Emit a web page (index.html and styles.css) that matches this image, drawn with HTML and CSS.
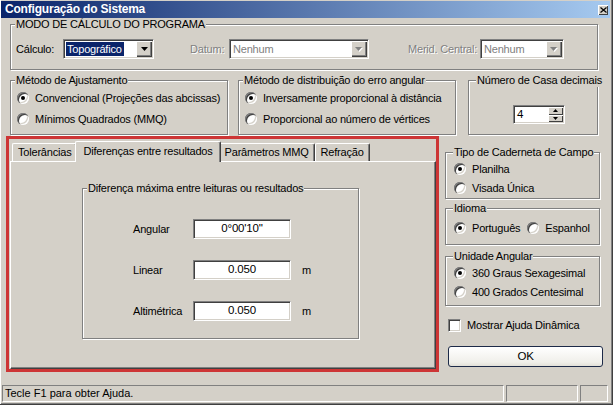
FILE: index.html
```html
<!DOCTYPE html>
<html lang="pt">
<head>
<meta charset="utf-8">
<title>Configuração do Sistema</title>
<link rel="stylesheet" href="styles.css">
</head>
<body>
<div class="window">
  <div class="titlebar">
    <span class="title">Configuração do Sistema</span>
    <span class="close"><svg width="7" height="6" viewBox="0 0 7 6"><path d="M0.5 0.5L6.5 5.5M6.5 0.5L0.5 5.5" stroke="#000" stroke-width="1.2" fill="none"/></svg></span>
  </div>
  <div class="content">
    <fieldset class="group g-modo">
      <legend>MODO DE CÁLCULO DO PROGRAMA</legend>
      <div class="gbody modo-row">
        <span class="lbl lbl-calc">Cálculo:</span>
        <div class="combo w-calc">
          <span class="combo-text"><span class="sel">Topográfico</span></span>
          <span class="dd"><svg width="7" height="4" viewBox="0 0 7 4"><path d="M0 0H7L3.5 4Z" fill="#000"/></svg></span>
        </div>
        <span class="lbl lbl-datum disabled">Datum:</span>
        <div class="combo w-datum">
          <span class="combo-text dis-text">Nenhum</span>
          <span class="dd"><svg width="8" height="5" viewBox="0 0 8 5"><path d="M1 1H8L4.5 5Z" fill="#fff"/><path d="M0 0H7L3.5 4Z" fill="#808080"/></svg></span>
        </div>
        <span class="lbl lbl-merid disabled">Merid. Central:</span>
        <div class="combo w-merid">
          <span class="combo-text dis-text">Nenhum</span>
          <span class="dd"><svg width="8" height="5" viewBox="0 0 8 5"><path d="M1 1H8L4.5 5Z" fill="#fff"/><path d="M0 0H7L3.5 4Z" fill="#808080"/></svg></span>
        </div>
      </div>
    </fieldset>

    <div class="row2">
      <fieldset class="group g-ajuste">
        <legend>Método de Ajustamento</legend>
        <div class="gbody radios2">
          <div class="ropt"><span class="radio on"></span><span>Convencional (Projeções das abcissas)</span></div>
          <div class="ropt"><span class="radio"></span><span>Mínimos Quadrados (MMQ)</span></div>
        </div>
      </fieldset>
      <fieldset class="group g-distr">
        <legend>Método de distribuição do erro angular</legend>
        <div class="gbody radios2">
          <div class="ropt"><span class="radio on"></span><span>Inversamente proporcional à distância</span></div>
          <div class="ropt"><span class="radio"></span><span>Proporcional ao número de vértices</span></div>
        </div>
      </fieldset>
      <fieldset class="group g-casas">
        <legend class="leg-r">Número de Casa decimais</legend>
        <div class="gbody casas-body">
          <div class="spin">
            <span class="spin-text">4</span>
            <span class="spin-btns">
              <span class="sb"><svg width="5" height="3" viewBox="0 0 5 3"><path d="M2.5 0L5 3H0Z" fill="#000"/></svg></span>
              <span class="sb"><svg width="5" height="3" viewBox="0 0 5 3"><path d="M0 0H5L2.5 3Z" fill="#000"/></svg></span>
            </span>
          </div>
        </div>
      </fieldset>
    </div>

    <div class="lower">
      <div class="redbox">
        <div class="tabs">
          <div class="tabstrip">
            <span class="tab">Tolerâncias</span>
            <span class="tab active">Diferenças entre resultados</span>
            <span class="tab">Parâmetros MMQ</span>
            <span class="tab">Refração</span>
          </div>
          <div class="tabpanel">
            <fieldset class="group g-diff">
              <legend>Diferença máxima entre leituras ou resultados</legend>
              <div class="gbody diff-body">
                <div class="frow"><span class="flbl">Angular</span><span class="field">0°00'10''</span></div>
                <div class="frow"><span class="flbl">Linear</span><span class="field">0.050</span><span class="unit">m</span></div>
                <div class="frow"><span class="flbl">Altimétrica</span><span class="field">0.050</span><span class="unit">m</span></div>
              </div>
            </fieldset>
          </div>
        </div>
      </div>

      <div class="rightcol">
        <fieldset class="group g-tipo">
          <legend class="leg-r">Tipo de Caderneta de Campo</legend>
          <div class="gbody tipo-body">
            <div class="ropt r17"><span class="radio on"></span><span>Planilha</span></div>
            <div class="ropt r17"><span class="radio"></span><span>Visada Única</span></div>
          </div>
        </fieldset>
        <fieldset class="group g-idioma">
          <legend class="leg-r">Idioma</legend>
          <div class="gbody idioma-body">
            <div class="ropt"><span class="radio on"></span><span>Português</span></div>
            <div class="ropt esp"><span class="radio"></span><span>Espanhol</span></div>
          </div>
        </fieldset>
        <fieldset class="group g-unid">
          <legend class="leg-r">Unidade Angular</legend>
          <div class="gbody unid-body">
            <div class="ropt"><span class="radio on"></span><span>360 Graus Sexagesimal</span></div>
            <div class="ropt"><span class="radio"></span><span>400 Grados Centesimal</span></div>
          </div>
        </fieldset>
        <div class="checkrow"><span class="check"></span><span>Mostrar Ajuda Dinâmica</span></div>
        <div class="okbtn">OK</div>
      </div>
    </div>

    <div class="statusbar">
      <span class="panel p-main">Tecle F1 para obter Ajuda.</span>
      <span class="panel p-2"></span>
      <span class="panel p-3"></span>
    </div>
  </div>
</div>
</body>
</html>
```

FILE: styles.css
```css
* { box-sizing: border-box; }
html, body { margin: 0; padding: 0; background: #d4d0c8; }
body {
  font-family: "Liberation Sans", Arial, sans-serif;
  font-size: 11px;
  letter-spacing: -0.2px;
  color: #000;
}

.window {
  width: 613px;
  height: 405px;
  display: flex;
  flex-direction: column;
  background: #d4d0c8;
  padding: 1px 2px 1px 1px;
  border-right: 1px solid #404040;
  border-bottom: 1px solid #404040;
  box-shadow: inset 1px 0 0 #fff, inset -1px -1px 0 #808080;
}

.titlebar {
  height: 17px;
  flex: none;
  display: flex;
  align-items: center;
  background: linear-gradient(to right, #0a246a, #a6caf0);
  padding: 0 2px 0 4px;
}
.title {
  color: #fff;
  font-weight: bold;
  font-size: 12px;
  letter-spacing: -0.2px;
  line-height: 17px;
}
.close {
  margin-left: auto;
  width: 10px;
  height: 10px;
  background: #d4d0c8;
  box-shadow: inset 1px 1px 0 #fff, inset -1px -1px 0 #404040;
  display: flex;
  align-items: center;
  justify-content: center;
}
.close svg { display: block; }

.content {
  flex: 1;
  display: flex;
  flex-direction: column;
  padding-left: 5px;
}

/* group boxes */
fieldset.group {
  margin: 0;
  padding: 0;
  min-width: 0;
  border: 1px solid #808080;
  box-shadow: 1px 1px 0 #fff, inset 1px 1px 0 #fff;
}
fieldset.group legend {
  padding: 0 1px;
  margin-left: 4px;
  height: 13px;
  line-height: 13px;
  white-space: nowrap;
  background: #d4d0c8;
}
fieldset.group legend.leg-r { margin-left: 7px; }

.g-modo { margin-left: 4px !important; width: 588px; }
.modo-row {
  display: flex;
  align-items: center;
  padding: 8px 0 10px 5px;
}
.lbl { line-height: 13px; }
.lbl-calc { width: 47px; }
.lbl-datum { margin-left: 36px; width: 39px; }
.lbl-merid { margin-left: 39px; width: 72px; }
.disabled { color: #808080; text-shadow: 1px 1px 0 #fff; }

.combo {
  display: flex;
  height: 20px;
  background: #fff;
  border: 1px solid;
  border-color: #808080 #fff #fff #808080;
  box-shadow: inset 1px 1px 0 #404040, inset -1px -1px 0 #d4d0c8;
  padding: 1px;
}
.w-calc { width: 91px; }
.w-datum { width: 140px; }
.w-merid { width: 84px; }
.combo-text {
  flex: 1;
  display: flex;
  align-items: center;
  padding-left: 1px;
  line-height: 13px;
}
.sel { background: #0a246a; color: #fff; padding: 1px 2px 0 1px; }
.dis-text { color: #808080; padding-left: 2px; }
.dd {
  width: 16px;
  height: 16px;
  flex: none;
  background: #d4d0c8;
  box-shadow: inset 1px 1px 0 #fff, inset -1px -1px 0 #404040, inset -2px -2px 0 #808080;
  display: flex;
  align-items: center;
  justify-content: center;
}
.dd svg { display: block; }

/* row 2 */
.row2 {
  display: flex;
  margin: 4px 0 0 4px;
}
.g-ajuste { width: 218px; }
.g-distr { width: 218px; margin-left: 10px !important; }
.g-casas { width: 130px; margin-left: 12px !important; }
.radios2 {
  display: flex;
  flex-direction: column;
  gap: 3px;
  padding: 2px 0 6px 6px;
}
.ropt {
  display: flex;
  align-items: center;
  gap: 6px;
  height: 18px;
  white-space: nowrap;
}
.ropt.r17 { height: 17px; }

.radio {
  width: 12px;
  height: 12px;
  flex: none;
  border-radius: 50%;
  background: #fff;
  position: relative;
  box-shadow: inset 1px 1px 0 #808080, inset 2px 2px 0 #404040, inset -1px -1px 0 #fff, inset -2px -2px 0 #d4d0c8;
}
.radio.on::after {
  content: "";
  position: absolute;
  left: 4px;
  top: 4px;
  width: 4px;
  height: 4px;
  border-radius: 50%;
  background: #000;
}

.casas-body { padding: 18px 0 0 44px; }
.spin {
  width: 52px;
  height: 19px;
  display: flex;
  background: #fff;
  border: 1px solid;
  border-color: #808080 #fff #fff #808080;
  box-shadow: inset 1px 1px 0 #404040, inset -1px -1px 0 #d4d0c8;
  padding: 1px;
}
.spin-text { flex: 1; padding-left: 2px; line-height: 15px; font-size: 11.5px; }
.spin-btns { width: 15px; display: flex; flex-direction: column; }
.sb {
  flex: 1;
  background: #d4d0c8;
  box-shadow: inset 1px 1px 0 #fff, inset -1px -1px 0 #404040;
  display: flex;
  align-items: center;
  justify-content: center;
}
.sb svg { display: block; }

/* lower area */
.lower {
  display: flex;
  margin-top: 1px;
}
.redbox {
  width: 433px;
  height: 236px;
  border: 3px solid #cd3535;
  flex: none;
}
.tabs {
  height: 100%;
  display: flex;
  flex-direction: column;
  padding: 2px 0 0 1px;
}
.tabstrip {
  display: flex;
  align-items: flex-end;
  height: 20px;
  flex: none;
  padding-left: 2px;
}
.tab {
  height: 18px;
  line-height: 17px;
  padding: 0 5px;
  background: #d4d0c8;
  border-top: 1px solid #fff;
  border-left: 1px solid #fff;
  border-right: 1px solid #404040;
  box-shadow: inset -1px 0 0 #808080;
  border-radius: 2px 2px 0 0;
  white-space: nowrap;
}
.tab.active {
  height: 21px;
  line-height: 19px;
  margin: 0 -2px -1px;
  padding: 0 7px;
  position: relative;
  z-index: 2;
}
.tabpanel {
  flex: 1;
  border-top: 1px solid #fff;
  border-left: 1px solid #fff;
  border-right: 1px solid #404040;
  border-bottom: 1px solid #404040;
  box-shadow: inset -1px -1px 0 #808080;
  padding: 20px 0 0 71px;
}
.g-diff { width: 277px; }
.diff-body {
  display: flex;
  flex-direction: column;
  gap: 21px;
  padding: 24px 0 17px 50px;
}
.frow { display: flex; align-items: center; height: 20px; }
.flbl { width: 60px; }
.field {
  width: 98px;
  height: 20px;
  background: #fff;
  border: 1px solid;
  border-color: #808080 #fff #fff #808080;
  box-shadow: inset 1px 1px 0 #404040, inset -1px -1px 0 #d4d0c8;
  text-align: center;
  line-height: 17px;
  font-size: 11.5px;
}
.unit { margin-left: 11px; }

/* right column */
.rightcol {
  width: 158px;
  margin-left: 6px;
  display: flex;
  flex-direction: column;
}
.g-tipo { width: 155px; margin-top: 10px !important; }
.tipo-body {
  display: flex;
  flex-direction: column;
  gap: 2px;
  padding: 1px 0 2px 8px;
}
.g-idioma { width: 155px; margin-top: 3px !important; }
.idioma-body {
  display: flex;
  padding: 4px 0 7px 8px;
}
.esp { margin-left: 7px; }
.g-unid { width: 155px; margin-top: 5px !important; }
.unid-body {
  display: flex;
  flex-direction: column;
  gap: 1px;
  padding: 1px 0 4px 8px;
}
.checkrow {
  display: flex;
  align-items: center;
  gap: 6px;
  height: 14px;
  margin: 12px 0 0 3px;
  white-space: nowrap;
}
.check {
  width: 13px;
  height: 13px;
  flex: none;
  background: #fff;
  border: 1px solid;
  border-color: #808080 #fff #fff #808080;
  box-shadow: inset 1px 1px 0 #404040, inset -1px -1px 0 #d4d0c8;
}
.okbtn {
  margin: 14px 0 0 3px;
  width: 155px;
  height: 21px;
  border: 1px solid #1d2a48;
  border-radius: 3px;
  background: linear-gradient(#ffffff, #f0efea 80%, #e2e0d8);
  text-align: center;
  line-height: 19px;
  font-size: 11.5px;
}

/* status bar */
.statusbar {
  margin-top: auto;
  margin-bottom: 1px;
  height: 17px;
  display: flex;
  gap: 2px;
  margin-left: -4px;
}
.panel {
  height: 17px;
  border: 1px solid;
  border-color: #808080 #fff #fff #808080;
  line-height: 15px;
  padding-left: 2px;
  font-size: 11px;
  letter-spacing: 0;
  white-space: nowrap;
}
.p-main { width: 502px; }
.p-2 { width: 72px; }
.p-3 { width: 28px; }
```
